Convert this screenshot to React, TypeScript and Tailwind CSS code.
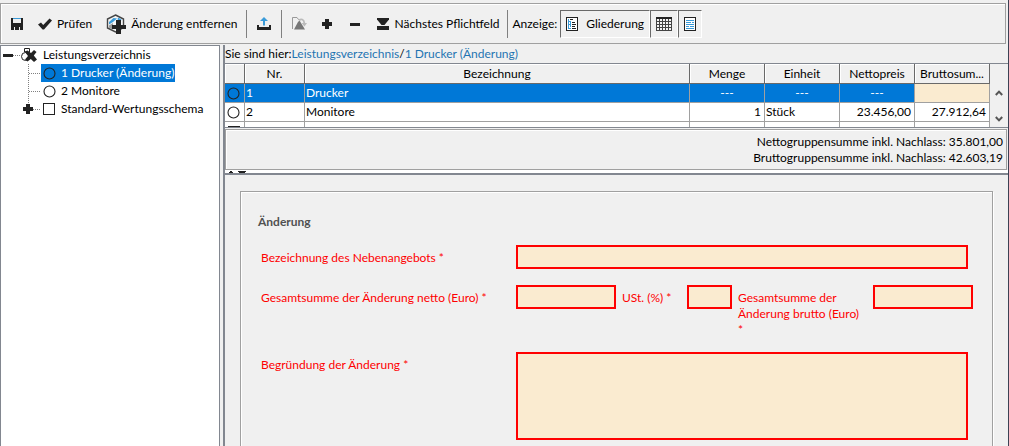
import React, { useState } from 'react';
import { clsx } from 'clsx';

interface Position {
  nr: string;
  name: string;
  menge: string;
  einheit: string;
  netto: string;
  brutto: string;
}

const POSITIONS: Position[] = [
  { nr: '1', name: 'Drucker', menge: '---', einheit: '---', netto: '---', brutto: '' },
  { nr: '2', name: 'Monitore', menge: '1', einheit: 'Stück', netto: '23.456,00', brutto: '27.912,64' },
];

/* Icons */
const SaveIcon = () => (
  <svg width="12" height="12" viewBox="0 0 12 12" shapeRendering="crispEdges">
    <path d="M0 0H2V5H10V0H12V12H9V9H8V12H4V9H3V12H0Z" fill="#222" />
    <path d="M2 0H10V1H2Z" fill="#3a9bd9" />
    <path d="M5 9H7V11H5Z" fill="#222" />
  </svg>
);

const CheckIcon = () => (
  <svg width="14" height="12" viewBox="0 0 14 12">
    <path d="M0 6.5L3 4.5L5.2 7L11.5 0.5L14 2.5L6 11.5H4.6Z" fill="#222" />
  </svg>
);

const ChangeIcon = () => (
  <svg width="20" height="20" viewBox="0 0 20 20">
    <path d="M9.5 1L17.5 5V13.5L9.5 18L1.5 14V5Z" fill="#f5f5f5" stroke="#444" strokeWidth="1.4" />
    <path d="M3 8L7.5 4L11 4.5L7 8L3 10.5Z" fill="#3a9bd9" />
    <path d="M12 3.5L15.5 5.5L14.5 8L11.5 5.5Z" fill="#3a9bd9" />
    <path d="M3 11.5L7 9V16L3 13.5Z" fill="#999" />
    <path d="M10 6H15V11H20V15H15V20H10V15H6V11H10Z" fill="#222" />
  </svg>
);

const UploadIcon = () => (
  <svg width="14" height="14" viewBox="0 0 14 14">
    <path d="M0 8H2V10H12V8H14V13H0Z" fill="#222" />
    <path d="M7 0L11 4H8V8.5H6V4H3Z" fill="#3a9bd9" />
  </svg>
);

const FolderIcon = () => (
  <svg width="15" height="13" viewBox="0 0 15 13">
    <path d="M0.5 12V0.5H5L6.5 2.5H9" fill="none" stroke="#999" />
    <path d="M2 12.5L6 5L7.5 3.5L13 12.5Z" fill="#777" />
    <path d="M7 3.5C9 1.5 12 2 12.3 6" fill="none" stroke="#bbb" strokeWidth="1.8" />
    <path d="M9.5 6H15L12.5 9.5Z" fill="#bbb" />
  </svg>
);

const PlusIcon = () => (
  <svg width="10" height="10" viewBox="0 0 10 10" shapeRendering="crispEdges">
    <path d="M3 0H7V3H10V7H7V10H3V7H0V3H3Z" fill="#222" />
  </svg>
);

const MinusIcon = () => (
  <svg width="10" height="10" viewBox="0 0 10 10" shapeRendering="crispEdges">
    <path d="M0 4H10V7H0Z" fill="#222" />
  </svg>
);

const NextFieldIcon = () => (
  <svg width="12" height="12" viewBox="0 0 12 12">
    <path d="M0 0H12V1.5L7.5 7H4.5L0 1.5Z" fill="#222" />
    <path d="M0 8H12V12H0Z" fill="#222" />
  </svg>
);

const OutlineIcon = () => (
  <svg width="12" height="14" viewBox="0 0 12 14" shapeRendering="crispEdges">
    <path d="M0.5 0.5H11.5V13.5H0.5Z" fill="#fff" stroke="#222" />
    <path d="M2.5 2V11.5H5M2.5 4.5H5M2.5 7.5H5M4.5 4V10" fill="none" stroke="#3a9bd9" />
    <path d="M4 2.5H7M6 5.5H9M6 7.5H10M6 9.5H9M6 11.5H10" stroke="#222" />
  </svg>
);

const GridIcon = () => (
  <svg width="16" height="14" viewBox="0 0 16 14" shapeRendering="crispEdges">
    <path d="M0 0H16V14H0Z" fill="#444" />
    <path d="M0 0H16V2H0Z" fill="#222" />
    <path d="M1 2H3V4H1ZM4 2H6V4H4ZM7 2H9V4H7ZM10 2H12V4H10ZM13 2H15V4H13ZM1 5H3V7H1ZM4 5H6V7H4ZM7 5H9V7H7ZM10 5H12V7H10ZM13 5H15V7H13ZM1 8H3V10H1ZM4 8H6V10H4ZM7 8H9V10H7ZM10 8H12V10H10ZM13 8H15V10H13ZM1 11H3V13H1ZM4 11H6V13H4ZM7 11H9V13H7ZM10 11H12V13H10ZM13 11H15V13H13Z" fill="#f5f5f5" />
  </svg>
);

const TextIcon = () => (
  <svg width="12" height="14" viewBox="0 0 12 14" shapeRendering="crispEdges">
    <path d="M0.5 0.5H11.5V13.5H0.5Z" fill="#fff" stroke="#222" />
    <path d="M2 3.5H10M2 5.5H7M8 5.5H10M2 7.5H10M2 9.5H5M6 9.5H10M2 11.5H10" stroke="#3a9bd9" />
  </svg>
);

const RootIcon = () => (
  <svg width="16" height="16" viewBox="0 0 16 16">
    <path d="M3.5 5V1.5H8.5V5" fill="#fff" stroke="#222" />
    <circle cx="4.5" cy="9.5" r="4" fill="#fff" stroke="#222" />
    <path d="M3.5 4.5L6.5 3.5L10 6L13 3L15.5 5L12.8 8.5L16 12.5L13 15L9.8 12L6.5 14.5L4 12.5L7 9Z" fill="#222" />
  </svg>
);

const CircleIcon = () => (
  <svg width="13" height="13" viewBox="0 0 13 13">
    <circle cx="6.5" cy="6.5" r="5.5" fill="none" stroke="#222" strokeWidth="1.1" />
  </svg>
);

const SquareIcon = () => (
  <svg width="13" height="13" viewBox="0 0 13 13" shapeRendering="crispEdges">
    <rect x="0.5" y="0.5" width="11" height="11" fill="#fff" stroke="#222" />
  </svg>
);

/* Dotted connector in front of a tree node */
const Branch = ({ last }: { last?: boolean }) => (
  <svg width="40" height="18" viewBox="0 0 40 18" shapeRendering="crispEdges" className="shrink-0">
    <path d={last ? 'M27.5 0V9' : 'M27.5 0V18'} stroke="#808080" strokeDasharray="1 1" />
    <path d="M28 9.5H40" stroke="#808080" strokeDasharray="1 1" />
    {last && <path d="M25 4H29V7H32V11H29V14H25V11H22V7H25Z" fill="#222" />}
  </svg>
);

const Separator = () => <div className="w-px self-stretch bg-[#808080]" />;

interface ToggleProps {
  label: string;
  icon: React.ReactNode;
  text?: string;
}

const Toggle = ({ label, icon, text }: ToggleProps) => (
  <button
    aria-label={label}
    className="flex h-7 items-center gap-2 border border-t-[#696969] border-l-[#696969] border-r-white border-b-white px-[5px]"
  >
    {icon}
    {text}
  </button>
);

const Toolbar = () => (
  <header className="mt-[3px] mr-0.5 flex h-[41px] items-center border border-[#a0a0a0] shadow-[inset_1px_1px_0_#fff]">
    <div className="flex h-7 items-center">
      <button aria-label="Speichern" className="ml-2.5"><SaveIcon /></button>
      <button className="ml-[15px] flex items-center gap-[5px]"><CheckIcon />Prüfen</button>
      <button className="ml-3.5 flex items-center gap-[5px]"><ChangeIcon />Änderung entfernen</button>
      <div className="ml-2 flex self-stretch"><Separator /></div>
      <button aria-label="Exportieren" className="mx-2.5"><UploadIcon /></button>
      <Separator />
      <button aria-label="Öffnen" className="ml-2.5"><FolderIcon /></button>
      <button aria-label="Hinzufügen" className="ml-[15px]"><PlusIcon /></button>
      <button aria-label="Entfernen" className="ml-[18px]"><MinusIcon /></button>
      <button className="mr-2 ml-[17px] flex items-center gap-1.5"><NextFieldIcon />Nächstes Pflichtfeld</button>
      <Separator />
      <span className="mr-[3px] ml-1">Anzeige:</span>
      <Toggle label="Gliederung" icon={<OutlineIcon />} text="Gliederung" />
      <Toggle label="Tabelle" icon={<GridIcon />} />
      <Toggle label="Text" icon={<TextIcon />} />
    </div>
  </header>
);

const NODES = ['1 Drucker (Änderung)', '2 Monitore', 'Standard-Wertungsschema'];

const Tree = () => {
  const [selected, setSelected] = useState(0);

  return (
    <nav className="w-[220px] shrink-0 overflow-hidden border border-b-0 border-[#828790] bg-white">
      <div className="flex h-[18px] items-center">
        <svg width="20" height="18" viewBox="0 0 20 18" shapeRendering="crispEdges">
          <path d="M2 8H12V11H2Z" fill="#222" />
          <path d="M12 9.5H20" stroke="#808080" strokeDasharray="1 1" />
        </svg>
        <button className="flex items-center gap-1.5"><RootIcon />Leistungsverzeichnis</button>
      </div>
      <ul>
        {NODES.map((name, idx) => (
          <li key={name} className="flex h-[18px] items-center">
            <Branch last={idx === NODES.length - 1} />
            <button
              onClick={() => setSelected(idx)}
              className={clsx(
                'flex h-[18px] items-center gap-[5px] pr-px pl-0.5 whitespace-nowrap',
                selected === idx && 'bg-[#0078d7] text-white'
              )}
            >
              {idx === 2 ? <SquareIcon /> : <CircleIcon />}
              {name}
            </button>
          </li>
        ))}
      </ul>
    </nav>
  );
};

const th = 'h-5 truncate border-r border-b border-[#696969] p-0 px-1 text-center font-normal shadow-[inset_1px_1px_0_#fff]';
const td = 'h-[19px] truncate border-r border-b border-[#a0a0a0] p-0 leading-[18px]';

const PositionTable = () => (
  <div className="flex h-[65px] overflow-hidden border-y border-[#828790]">
    <div className="min-w-0 flex-1">
      <table className="w-full table-fixed border-separate border-spacing-0">
        <colgroup>
          <col className="w-5" />
          <col className="w-[60px]" />
          <col />
          <col className="w-[75px]" />
          <col className="w-[75px]" />
          <col className="w-[75px]" />
          <col className="w-[75px]" />
        </colgroup>
        <thead>
          <tr>
            <th className={th} aria-label="Typ" />
            <th className={th}>Nr.</th>
            <th className={th}>Bezeichnung</th>
            <th className={th}>Menge</th>
            <th className={th}>Einheit</th>
            <th className={th}>Nettopreis</th>
            <th className={th}>Bruttosum...</th>
          </tr>
        </thead>
        <tbody>
          {POSITIONS.map((p, idx) => {
            const active = idx === 0;
            return (
              <tr key={p.nr} className={active ? 'bg-[#0078d7] text-white' : 'bg-white'}>
                <td className={clsx(td, 'pl-0.5')}><CircleIcon /></td>
                <td className={clsx(td, 'pl-px')}>{p.nr}</td>
                <td className={clsx(td, 'pl-px')}>{p.name}</td>
                <td className={clsx(td, active ? 'text-center' : 'pr-[3px] text-right')}>{p.menge}</td>
                <td className={clsx(td, active ? 'text-center' : 'pl-px')}>{p.einheit}</td>
                <td className={clsx(td, active ? 'text-center' : 'pr-[3px] text-right')}>{p.netto}</td>
                <td className={clsx(td, 'pr-[3px] text-right', active && 'bg-[#faebd0]')}>{p.brutto}</td>
              </tr>
            );
          })}
          <tr className="bg-white">
            <td className={clsx(td, 'pt-[3px] pl-[3px]')}><SquareIcon /></td>
            <td className={td} />
            <td className={td} />
            <td className={td} />
            <td className={td} />
            <td className={td} />
            <td className={td} />
          </tr>
        </tbody>
      </table>
    </div>
    <div className="flex w-[18px] flex-col items-center justify-end gap-[18px] pb-1">
      <button aria-label="Nach oben">
        <svg width="8" height="8" viewBox="0 0 8 8"><path d="M0.8 6L4 2.6L7.2 6" fill="none" stroke="#555" strokeWidth="2" /></svg>
      </button>
      <button aria-label="Nach unten">
        <svg width="8" height="8" viewBox="0 0 8 8"><path d="M0.8 2L4 5.4L7.2 2" fill="none" stroke="#555" strokeWidth="2" /></svg>
      </button>
    </div>
  </div>
);

const field = 'block border-2 border-[#f00] bg-[#faebd0] px-1 text-black outline-none';

const ChangeForm = () => (
  <form className="min-h-0 flex-1 overflow-hidden border-t-2 border-[#828790] px-[15px] pt-4">
    <fieldset className="min-h-full border border-[#a0a0a0] pt-[22px] pr-[19px] pb-6 pl-[17px] shadow-[inset_1px_1px_0_#fff,1px_1px_0_#fff]">
      <h2 className="font-bold text-[#505050]">Änderung</h2>
      <div className="mt-[15px] flex flex-col pl-[3px] text-[#f00]">
        <div className="mr-[5px] flex items-start">
          <label htmlFor="bezeichnung" className="w-[255px] shrink-0 pt-[5px]">Bezeichnung des Nebenangebots *</label>
          <input id="bezeichnung" className={clsx(field, 'h-6 min-w-0 flex-1')} />
        </div>
        <div className="mt-4 flex items-start">
          <label htmlFor="netto" className="w-[255px] shrink-0 pt-[5px]">Gesamtsumme der Änderung netto (Euro) *</label>
          <input id="netto" className={clsx(field, 'h-6 w-[100px]')} />
          <label htmlFor="ust" className="ml-1.5 w-[65px] shrink-0 pt-[5px]">USt. (%) *</label>
          <input id="ust" className={clsx(field, 'h-6 w-[45px]')} />
          <label htmlFor="brutto" className="ml-1.5 min-w-0 flex-1 pt-[5px] pr-2">Gesamtsumme der Änderung brutto (Euro) *</label>
          <input id="brutto" className={clsx(field, 'h-6 w-[100px]')} />
        </div>
        <div className="mt-[14px] mr-[5px] flex items-start">
          <label htmlFor="begruendung" className="w-[255px] shrink-0 pt-[5px]">Begründung der Änderung *</label>
          <textarea id="begruendung" className={clsx(field, 'h-[88px] min-w-0 flex-1 resize-none')} />
        </div>
      </div>
    </fieldset>
  </form>
);

export default function App() {
  return (
    <div className="flex h-screen flex-col overflow-hidden border-r border-[#3c4254] bg-[#f0f0f0] font-['Lato','Open_Sans',sans-serif] text-[12px] leading-4 text-black">
      <Toolbar />
      <div className="mt-px flex min-h-0 flex-1 gap-[3px]">
        <Tree />
        <main className="flex min-w-0 flex-1 flex-col border-l-2 border-[#828790]">
          <p className="h-[18px] pt-px">
            Sie sind hier:
            <a href="#lv" className="text-[#1f74b2]">Leistungsverzeichnis</a>/
            <a href="#drucker" className="text-[#1f74b2]">1 Drucker (Änderung)</a>
          </p>
          <PositionTable />
          <div className="mt-px mr-px border border-[#a0a0a0] pt-1 pr-[3px] pb-[3px] text-right shadow-[inset_1px_1px_0_#fff]">
            <p>Nettogruppensumme inkl. Nachlass: 35.801,00</p>
            <p>Bruttogruppensumme inkl. Nachlass: 42.603,19</p>
          </div>
          {/* splitter */}
          <div className="flex h-[3px] items-end bg-white">
            <svg width="24" height="3" viewBox="0 0 24 3" shapeRendering="crispEdges">
              <path d="M3 3L6 0.5L9 3ZM13 1H21V2H20V3H14V2H13Z" fill="#222" />
            </svg>
          </div>
          <ChangeForm />
        </main>
      </div>
    </div>
  );
}
